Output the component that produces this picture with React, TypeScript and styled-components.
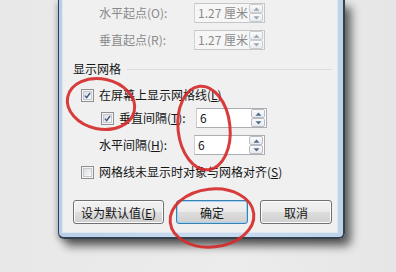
import React from "react";
import styled, { createGlobalStyle } from "styled-components";

const GlobalStyle = createGlobalStyle`
  html, body {
    margin: 0;
    padding: 0;
    background: #e9e9e9;
  }
  body {
    font-family: "Noto Sans CJK SC", "Liberation Sans", sans-serif;
    font-size: 12px;
  }
`;

const Page = styled.div`
  position: relative;
  width: 396px;
  height: 272px;
  overflow: hidden;
  padding-left: 58px;
  box-sizing: border-box;
  background: linear-gradient(to right, #e8e8e8, #ececec 60%, #e6e6e6);
`;

const Window = styled.div`
  width: 287px;
  height: 239px;
  box-sizing: border-box;
  border: 1px solid #34414f;
  border-right-width: 2px;
  border-bottom-width: 2px;
  border-top: none;
  border-radius: 0 0 6px 6px;
  padding: 0 5px 4px 3px;
  background: linear-gradient(to right, #b9cfe8, #cadcf0 50%, #bed3ea);
  box-shadow: 6px 7px 10px rgba(0, 0, 0, 0.6), -2px 2px 5px rgba(0, 0, 0, 0.18);
`;

const Panel = styled.div`
  height: 100%;
  box-sizing: border-box;
  background: #f0f0f0;
  border: 1px solid #dfe7f1;
  border-top: none;
  padding: 3px 0 0 0;
  display: flex;
  flex-direction: column;
`;

const Row = styled.div<{ $top?: number; $indent?: number; $h?: number }>`
  display: flex;
  align-items: center;
  height: ${(p) => p.$h ?? 20}px;
  margin-top: ${(p) => p.$top ?? 0}px;
  padding-left: ${(p) => p.$indent ?? 0}px;
`;

const Label = styled.span<{ $disabled?: boolean; $width?: number }>`
  color: ${(p) => (p.$disabled ? "#8a8a8a" : "#151515")};
  line-height: 16px;
  white-space: nowrap;
  ${(p) => (p.$width ? `width: ${p.$width}px;` : "")}
`;

const Key = styled.span`
  text-decoration: underline;
  text-underline-offset: 1px;
`;

const GroupHead = styled.div`
  display: flex;
  align-items: center;
  gap: 6px;
  padding-left: 10px;
  padding-right: 5px;
  height: 16px;
  margin-top: 11px;
`;

const GroupLine = styled.div`
  flex: 1;
  height: 1px;
  background: #d8dde2;
`;

const Field = styled.div<{ $disabled?: boolean }>`
  width: 71px;
  height: 20px;
  box-sizing: border-box;
  border: 1px solid ${(p) => (p.$disabled ? "#c4c6ca" : "#abadb3")};
  border-left-color: ${(p) => (p.$disabled ? "#d0d2d6" : "#c9ccd4")};
  background: ${(p) => (p.$disabled ? "#f6f6f6" : "#ffffff")};
  display: flex;
  align-items: center;
  padding: 0 1px 0 3px;
`;

const FieldValue = styled.span<{ $disabled?: boolean }>`
  flex: 1;
  color: ${(p) => (p.$disabled ? "#8a8a8a" : "#151515")};
  font-size: 12px;
  line-height: 16px;
  white-space: nowrap;
  overflow: hidden;
`;

const Spinner = styled.div`
  width: 14px;
  height: 18px;
  display: flex;
  flex-direction: column;
`;

const SpinButton = styled.div<{ $disabled?: boolean }>`
  flex: 1;
  box-sizing: border-box;
  border: 1px solid ${(p) => (p.$disabled ? "#c9cbce" : "#b7bcc4")};
  border-radius: 2px;
  background: linear-gradient(#fbfbfb, #e9eaec);
  display: flex;
  align-items: center;
  justify-content: center;
  color: ${(p) => (p.$disabled ? "#9aa6b4" : "#4e6a8c")};
`;

const Box = styled.div<{ $left: number }>`
  width: 13px;
  height: 13px;
  box-sizing: border-box;
  border: 1px solid #8f8f8f;
  background: #f4f4f4;
  padding: 1px;
  margin-left: ${(p) => p.$left}px;
  margin-right: 5px;
  flex-shrink: 0;
`;

const BoxInner = styled.div`
  width: 100%;
  height: 100%;
  box-sizing: border-box;
  border: 1px solid #c5c9d0;
  background: linear-gradient(135deg, #dcdde0, #fbfbfb);
  display: flex;
  align-items: center;
  justify-content: center;
`;

const ButtonBar = styled.div`
  display: flex;
  margin-top: 20px;
  padding-left: 10px;
`;

const Button = styled.div<{ $width: number; $gap?: number; $default?: boolean }>`
  width: ${(p) => p.$width}px;
  height: 24px;
  margin-left: ${(p) => p.$gap ?? 0}px;
  box-sizing: border-box;
  border: 1px solid ${(p) => (p.$default ? "#3c7fb1" : "#707070")};
  border-radius: 3px;
  background: linear-gradient(#f2f2f2 0%, #ebebeb 48%, #dddddd 52%, #cfcfcf 100%);
  box-shadow: inset 0 0 0 1px ${(p) => (p.$default ? "#9fd3f1" : "#fcfcfc")};
  display: flex;
  align-items: center;
  justify-content: center;
  color: #151515;
  white-space: nowrap;
`;

const Marks = styled.svg`
  position: absolute;
  left: 0;
  top: 0;
  pointer-events: none;
`;

const Check = () => (
  <svg width="9" height="9" viewBox="0 0 9 9">
    <path d="M1.2 4.6 L3.4 7.2 L7.8 1.3" fill="none" stroke="#3c4f8c" strokeWidth="1.7" />
  </svg>
);

const CheckBox = ({ checked, left }: { checked?: boolean; left: number }) => (
  <Box $left={left}>
    <BoxInner>{checked && <Check />}</BoxInner>
  </Box>
);

const Arrow = ({ up }: { up?: boolean }) => (
  <svg width="7" height="4" viewBox="0 0 7 4">
    <path d={up ? "M0.5 3.8 L3.5 0.5 L6.5 3.8 Z" : "M0.5 0.2 L3.5 3.5 L6.5 0.2 Z"} fill="currentColor" />
  </svg>
);

const SpinField = ({ value, disabled }: { value: string; disabled?: boolean }) => (
  <Field $disabled={disabled}>
    <FieldValue $disabled={disabled}>{value}</FieldValue>
    <Spinner>
      <SpinButton $disabled={disabled}>
        <Arrow up />
      </SpinButton>
      <SpinButton $disabled={disabled}>
        <Arrow />
      </SpinButton>
    </Spinner>
  </Field>
);

export default function App() {
  return (
    <>
      <GlobalStyle />
      <Page>
        <Window>
          <Panel>
            <Row $indent={36}>
              <Label $disabled $width={95}>水平起点(O):</Label>
              <SpinField value="1.27 厘米" disabled />
            </Row>
            <Row $indent={36} $top={7}>
              <Label $disabled $width={95}>垂直起点(R):</Label>
              <SpinField value="1.27 厘米" disabled />
            </Row>

            <GroupHead>
              <Label>显示网格</Label>
              <GroupLine />
            </GroupHead>

            <Row $top={10} $h={16}>
              <CheckBox checked left={18} />
              <Label>
                在屏幕上显示网格线(<Key>L</Key>)
              </Label>
            </Row>
            <Row $top={5}>
              <CheckBox checked left={38} />
              <Label $width={77}>
                垂直间隔(<Key>T</Key>):
              </Label>
              <SpinField value="6" />
            </Row>
            <Row $indent={36} $top={7}>
              <Label $width={95}>
                水平间隔(<Key>H</Key>):
              </Label>
              <SpinField value="6" />
            </Row>
            <Row $top={9} $h={16}>
              <CheckBox left={18} />
              <Label>
                网格线未显示时对象与网格对齐(<Key>S</Key>)
              </Label>
            </Row>

            <ButtonBar>
              <Button $width={91}>
                设为默认值(<Key>E</Key>)
              </Button>
              <Button $width={72} $gap={12} $default>
                确定
              </Button>
              <Button $width={72} $gap={12}>
                取消
              </Button>
            </ButtonBar>
          </Panel>
        </Window>

        {/* red hand-drawn marks over the dialog */}
        <Marks width="396" height="272" viewBox="0 0 396 272">
          <g fill="none" stroke="#d62b2b" strokeWidth="3" strokeOpacity="0.92">
            <ellipse cx="101" cy="104" rx="34" ry="25" transform="rotate(12 101 104)" />
            <ellipse cx="204" cy="128" rx="26" ry="42" transform="rotate(-6 204 128)" />
            <ellipse cx="212" cy="218" rx="42" ry="29" transform="rotate(-6 212 218)" />
          </g>
        </Marks>
      </Page>
    </>
  );
}
